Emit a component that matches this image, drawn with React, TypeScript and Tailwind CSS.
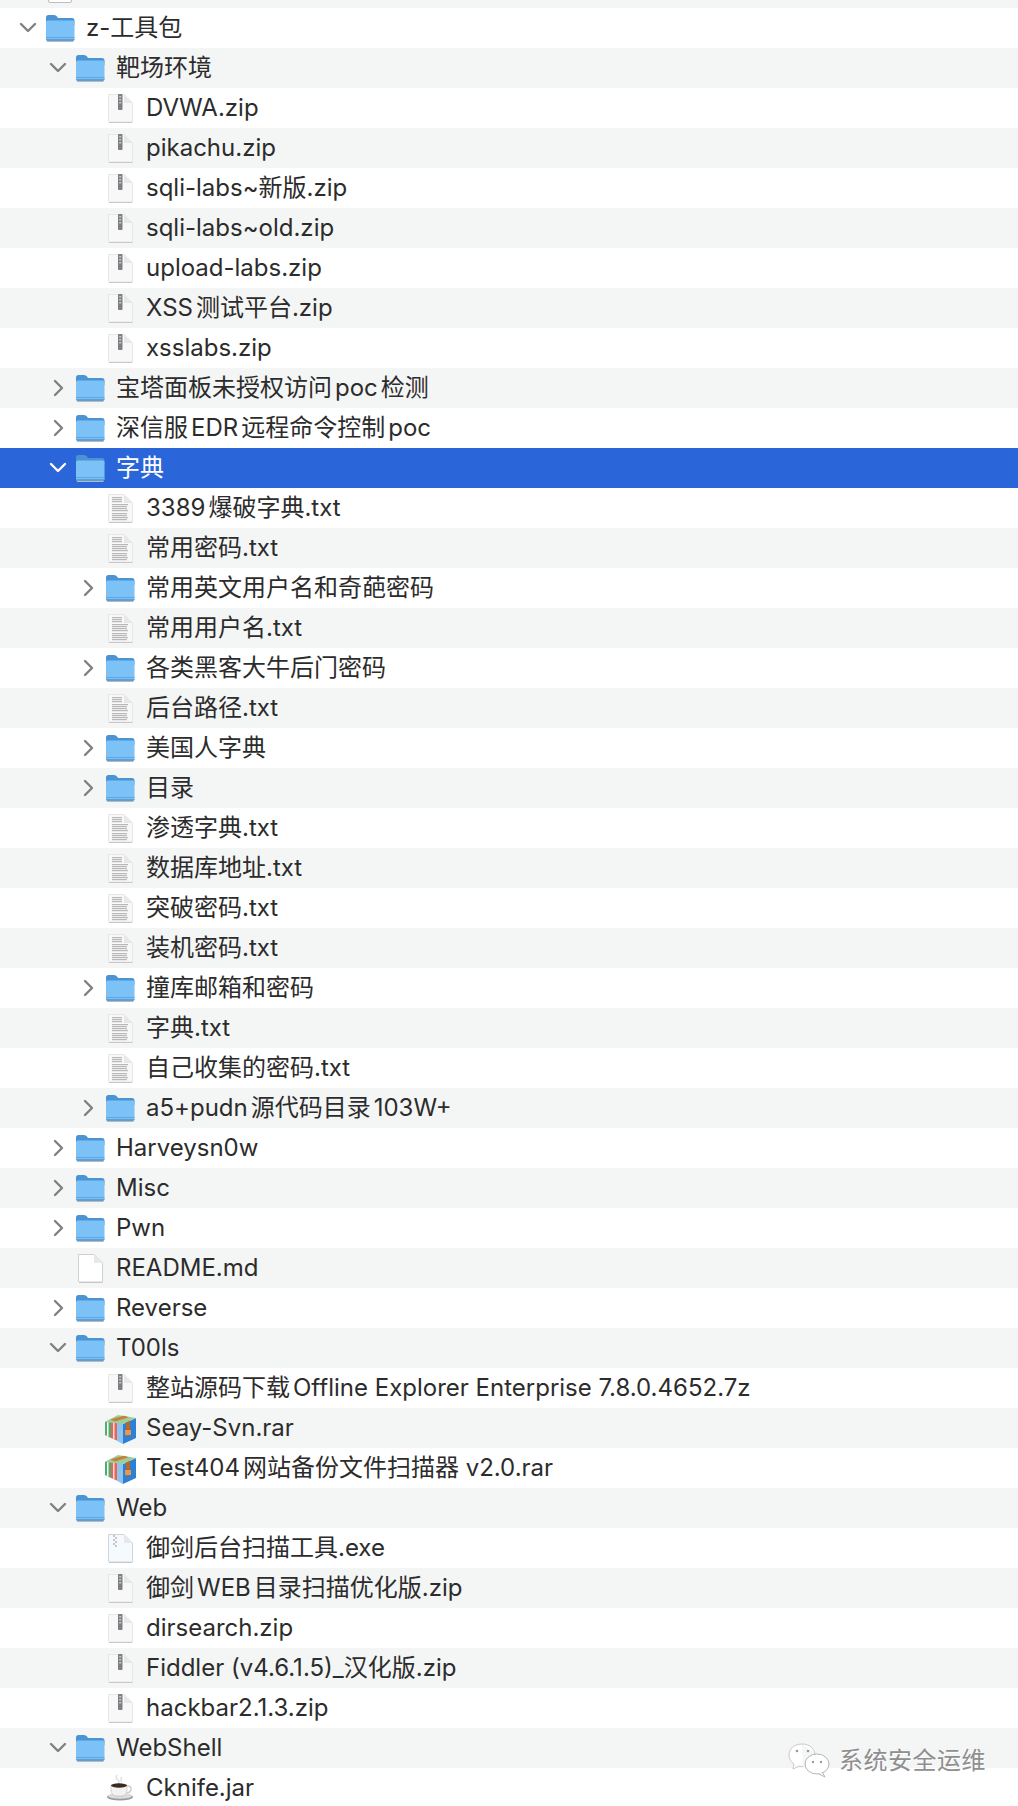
import type { ReactNode } from 'react'

type Kind = 'folder' | 'zip' | 'txt' | 'md' | 'rar' | 'exe' | 'jar'

type Row = {
  name: string
  kind: Kind
  depth: number
  open?: boolean
  selected?: boolean
}

const rows: Row[] = [
  { name: 'z-工具包', kind: 'folder', depth: 0, open: true },
  { name: '靶场环境', kind: 'folder', depth: 1, open: true },
  { name: 'DVWA.zip', kind: 'zip', depth: 2 },
  { name: 'pikachu.zip', kind: 'zip', depth: 2 },
  { name: 'sqli-labs~新版.zip', kind: 'zip', depth: 2 },
  { name: 'sqli-labs~old.zip', kind: 'zip', depth: 2 },
  { name: 'upload-labs.zip', kind: 'zip', depth: 2 },
  { name: 'XSS测试平台.zip', kind: 'zip', depth: 2 },
  { name: 'xsslabs.zip', kind: 'zip', depth: 2 },
  { name: '宝塔面板未授权访问poc检测', kind: 'folder', depth: 1 },
  { name: '深信服EDR远程命令控制poc', kind: 'folder', depth: 1 },
  { name: '字典', kind: 'folder', depth: 1, open: true, selected: true },
  { name: '3389爆破字典.txt', kind: 'txt', depth: 2 },
  { name: '常用密码.txt', kind: 'txt', depth: 2 },
  { name: '常用英文用户名和奇葩密码', kind: 'folder', depth: 2 },
  { name: '常用用户名.txt', kind: 'txt', depth: 2 },
  { name: '各类黑客大牛后门密码', kind: 'folder', depth: 2 },
  { name: '后台路径.txt', kind: 'txt', depth: 2 },
  { name: '美国人字典', kind: 'folder', depth: 2 },
  { name: '目录', kind: 'folder', depth: 2 },
  { name: '渗透字典.txt', kind: 'txt', depth: 2 },
  { name: '数据库地址.txt', kind: 'txt', depth: 2 },
  { name: '突破密码.txt', kind: 'txt', depth: 2 },
  { name: '装机密码.txt', kind: 'txt', depth: 2 },
  { name: '撞库邮箱和密码', kind: 'folder', depth: 2 },
  { name: '字典.txt', kind: 'txt', depth: 2 },
  { name: '自己收集的密码.txt', kind: 'txt', depth: 2 },
  { name: 'a5+pudn源代码目录103W+', kind: 'folder', depth: 2 },
  { name: 'Harveysn0w', kind: 'folder', depth: 1 },
  { name: 'Misc', kind: 'folder', depth: 1 },
  { name: 'Pwn', kind: 'folder', depth: 1 },
  { name: 'README.md', kind: 'md', depth: 1 },
  { name: 'Reverse', kind: 'folder', depth: 1 },
  { name: 'T00ls', kind: 'folder', depth: 1, open: true },
  { name: '整站源码下载Offline Explorer Enterprise 7.8.0.4652.7z', kind: 'zip', depth: 2 },
  { name: 'Seay-Svn.rar', kind: 'rar', depth: 2 },
  { name: 'Test404网站备份文件扫描器 v2.0.rar', kind: 'rar', depth: 2 },
  { name: 'Web', kind: 'folder', depth: 1, open: true },
  { name: '御剑后台扫描工具.exe', kind: 'exe', depth: 2 },
  { name: '御剑WEB目录扫描优化版.zip', kind: 'zip', depth: 2 },
  { name: 'dirsearch.zip', kind: 'zip', depth: 2 },
  { name: 'Fiddler (v4.6.1.5)_汉化版.zip', kind: 'zip', depth: 2 },
  { name: 'hackbar2.1.3.zip', kind: 'zip', depth: 2 },
  { name: 'WebShell', kind: 'folder', depth: 1, open: true },
  { name: 'Cknife.jar', kind: 'jar', depth: 2 },
]

function Chevron({ open, selected }: { open?: boolean; selected?: boolean }) {
  const color = selected ? '#ffffff' : '#808080'
  return (
    <svg width="18" height="18" viewBox="0 0 18 18" fill="none">
      <path
        d={open ? 'M2 5 L9 12 L16 5' : 'M6 2 L13 9 L6 16'}
        stroke={color}
        strokeWidth="2.4"
        strokeLinecap="round"
        strokeLinejoin="round"
      />
    </svg>
  )
}

function FolderIcon() {
  return (
    <svg width="32" height="30" viewBox="0 0 32 30">
      <path d="M2 4.5 Q2 2 4.5 2 H10 Q12 2 13 3.5 L14 5 H28 Q30.5 5 30.5 7.5 V12 H2 Z" fill="#4a94d6" />
      <path d="M2 9 Q2 7.5 3.5 7.5 H29 Q30.5 7.5 30.5 9 V26 Q30.5 28 28.5 28 H4 Q2 28 2 26 Z" fill="#7dc2f7" />
      <rect x="2" y="24" width="28.5" height="1" fill="#62a6e0" />
      <path d="M2 26 V26.2 Q2 28 4 28 H28.5 Q30.5 28 30.5 26.2 V26 Z" fill="#5a9fd9" />
      <rect x="3" y="28" width="26.5" height="1" fill="#b9b9b9" />
    </svg>
  )
}

function PageShell({ children, fill = '#f8f8f8', stroke = '#e6e6e6' }: { children?: ReactNode; fill?: string; stroke?: string }) {
  return (
    <svg width="28" height="32" viewBox="0 0 28 32">
      <path d="M2.5 2.5 H18 L26.5 11 V29.5 Q26.5 30 26 30 H3 Q2.5 30 2.5 29.5 Z" fill={fill} stroke={stroke} strokeWidth="1" />
      <path d="M18 2.5 V11 H26.5 Z" fill="#e8e8e8" />
      <rect x="3" y="30" width="23.5" height="1" fill="#c8c8c8" />
      {children}
    </svg>
  )
}

function ZipIcon() {
  return (
    <PageShell>
      <rect x="12" y="2" width="4.5" height="16" rx="1" fill="#7d7f83" />
      <rect x="13.2" y="4" width="2" height="1.5" fill="#c8c8c8" />
      <rect x="13.2" y="7" width="2" height="1.5" fill="#c8c8c8" />
      <rect x="13.2" y="10" width="2" height="1.5" fill="#c8c8c8" />
    </PageShell>
  )
}

function TxtIcon() {
  const lines = [5, 7, 9, 12, 14, 16, 18, 21, 23, 25, 27]
  return (
    <PageShell>
      {lines.map((y, i) => (
        <rect key={y} x="6" y={y} width={i < 3 ? 10 : i % 3 === 0 ? 16 : 15} height="1.2" fill="#b8b8b8" />
      ))}
    </PageShell>
  )
}

function ExeIcon() {
  return (
    <PageShell fill="#f5fafe" stroke="#d0d4d8">
      <rect x="7" y="3" width="2" height="2" fill="#c6c6c6" />
      <rect x="9" y="5" width="2" height="2" fill="#c6c6c6" />
      <rect x="7" y="7" width="2" height="2" fill="#c6c6c6" />
      <rect x="9" y="9" width="2" height="2" fill="#c6c6c6" />
      <rect x="7" y="11" width="2" height="2" fill="#c6c6c6" />
      <rect x="9" y="13" width="2" height="2" fill="#c6c6c6" />
    </PageShell>
  )
}

// three books standing in a row, brown strap across the top and front
function RarIcon() {
  return (
    <svg width="34" height="34" viewBox="0 0 34 34">
      <path d="M2 11 L8 8 V27 L2 24 Z" fill="#4fae6d" />
      <path d="M4 10 L5.5 9.3 V25.7 L4 25 Z" fill="#ffffff" />
      <path d="M8 9 L15 6 V30 L8 27 Z" fill="#e2675a" />
      <path d="M10 8.3 L11.5 7.6 V28.6 L10 28 Z" fill="#f7d9d3" />
      <path d="M14 10 L20 13 V33 L14 30 Z" fill="#8fc4ee" />
      <path d="M20 13 L33 7 V27 L20 33 Z" fill="#2f7fd3" />
      <path d="M2 11 L15 4 L33 7 L20 13 Z" fill="#9ccf9a" />
      <path d="M7 8.5 L21 4.8 L26 6.2 L12 10.5 Z" fill="#c97f3c" />
      <path d="M23 11.6 L27 9.8 V24 L23 25.8 Z" fill="#b56a2c" />
      <rect x="22" y="19" width="6" height="5" fill="#e09a52" />
    </svg>
  )
}

function JarIcon() {
  return (
    <svg width="28" height="28" viewBox="0 0 28 28">
      <path d="M11 1 Q9 4 12 6 Q14 8 12 10" stroke="#e2e2e2" strokeWidth="1.5" fill="none" />
      <path d="M16 3 Q14 6 16 8" stroke="#e2e2e2" strokeWidth="1.5" fill="none" />
      <ellipse cx="14" cy="23" rx="13" ry="3.5" fill="#9a9a9a" />
      <ellipse cx="14" cy="22" rx="12" ry="2.8" fill="#dcdcdc" />
      <path d="M5 11 H21 V16 Q21 22 15 22 H11 Q5 22 5 16 Z" fill="#f2f2f2" stroke="#b0b0b0" strokeWidth="0.5" />
      <path d="M21 12 Q26 12 25 16 Q24 19 20 19" fill="none" stroke="#cfcfcf" strokeWidth="1.6" />
      <ellipse cx="13" cy="11.5" rx="8" ry="2.2" fill="#3a2a20" />
    </svg>
  )
}

function FileIcon({ kind }: { kind: Kind }) {
  if (kind === 'folder') return <FolderIcon />
  if (kind === 'zip') return <ZipIcon />
  if (kind === 'txt') return <TxtIcon />
  if (kind === 'rar') return <RarIcon />
  if (kind === 'exe') return <ExeIcon />
  if (kind === 'jar') return <JarIcon />
  return <PageShell fill="#ffffff" stroke="#cfcfcf" />
}

function TreeRow({ row, index }: { row: Row; index: number }) {
  const indent = ['pl-[19px]', 'pl-[49px]', 'pl-[79px]'][row.depth]
  const stripe = row.selected ? 'bg-[#2a65d9] text-white' : index % 2 === 1 ? 'bg-[#f4f5f5] text-[#2c2c2c]' : 'bg-white text-[#2c2c2c]'

  return (
    <div className={`flex h-10 items-center ${indent} ${stripe}`}>
      <div className="flex w-[24px] shrink-0 items-center">
        {row.kind === 'folder' && <Chevron open={row.open} selected={row.selected} />}
      </div>
      <div className="flex w-[34px] shrink-0 items-center justify-center">
        <FileIcon kind={row.kind} />
      </div>
      <span className="ml-[9px] whitespace-nowrap text-[24px] leading-none [text-autospace:normal]">{row.name}</span>
    </div>
  )
}

export default function App() {
  return (
    <div
      className="relative h-[1806px] w-[1018px] overflow-hidden bg-white"
      style={{ fontFamily: 'Inter, "Noto Sans CJK SC", sans-serif' }}
    >
      <div className="relative h-2 overflow-hidden bg-[#f4f5f5]">
        <div className="absolute bottom-[5px] left-[48px] h-[10px] w-[24px] rounded-b-[2px] border border-[#bdbdbd] bg-white" />
      </div>
      {rows.map((row, index) => (
        <TreeRow key={row.name} row={row} index={index} />
      ))}

      <div className="absolute left-[788px] top-[1743px] flex items-center gap-[9px] text-[#8f8f8f]">
        <svg width="42" height="36" viewBox="0 0 42 36" fill="none">
          <path d="M14 1 C6 1 1 6 1 12 C1 16 3 19 6 21 L5 26 L11 23 C12.5 23.5 14 23.5 15 23.5" fill="#ffffff" stroke="#c9c9c9" />
          <path d="M14 1 C21 1 26 5 27 11" stroke="#c9c9c9" fill="#ffffff" />
          <ellipse cx="29" cy="21" rx="12" ry="10" fill="#ffffff" stroke="#b5b5b5" />
          <path d="M34 29 L37 34 L31 31" fill="#ffffff" stroke="#b5b5b5" />
          <circle cx="9" cy="8" r="1.3" fill="#9a9a9a" />
          <circle cx="20" cy="8" r="1.3" fill="#9a9a9a" />
          <circle cx="25" cy="19" r="1.2" fill="#9a9a9a" />
          <circle cx="33" cy="19" r="1.2" fill="#9a9a9a" />
        </svg>
        <span className="whitespace-nowrap text-[24px] leading-none tracking-[0.5px] [text-shadow:1px_1px_0_#ffffff]">系统安全运维</span>
      </div>
    </div>
  )
}
